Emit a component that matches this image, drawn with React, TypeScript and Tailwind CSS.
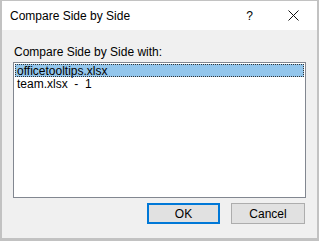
export default function App() {
  const font = { fontFamily: '"Liberation Sans", Arial, sans-serif' };
  return (
    <div
      className="w-[319px] h-[241px] flex flex-col bg-[#f0f0f0] border-[#c2c2c2] border-t border-l-2 border-r-2 border-b-[3px] text-black"
      style={font}
    >
      {/* title bar */}
      <div className="h-[29px] bg-white flex items-center pl-[8px] pr-[16px] text-[12px] shrink-0">
        <span className="flex-1">Compare Side by Side</span>
        <span className="text-[12px] mr-[35px]">?</span>
        <svg width="11" height="11" viewBox="0 0 11 11" className="mr-[2px]">
          <path d="M0.5 0.5 L10.5 10.5 M10.5 0.5 L0.5 10.5" stroke="#111" strokeWidth="1" />
        </svg>
      </div>

      <div className="flex-1 flex flex-col px-[11px] pt-[15px]">
        <div className="text-[12px] leading-[14px] mb-[3px] pl-[1px]">Compare Side by Side with:</div>
        <div className="h-[136px] bg-white border border-[#828790] p-[1px] text-[12px] leading-[12px]">
          <div className="h-[13px] bg-[#93c6ec] outline outline-1 outline-dotted outline-[#333] -outline-offset-1 pl-[2px] flex items-center">
            officetooltips.xlsx
          </div>
          <div className="h-[13px] pl-[2px] flex items-center whitespace-pre">team.xlsx  -  1</div>
        </div>
        <div className="flex justify-end gap-[11px] mt-[5px] mr-[1px]">
          <button className="w-[73px] h-[21px] bg-[#e1e1e1] border-2 border-[#0078d7] text-[12px] flex items-center justify-center">
            OK
          </button>
          <button className="w-[74px] h-[21px] bg-[#e1e1e1] border border-[#adadad] text-[12px] flex items-center justify-center">
            Cancel
          </button>
        </div>
      </div>
    </div>
  );
}
